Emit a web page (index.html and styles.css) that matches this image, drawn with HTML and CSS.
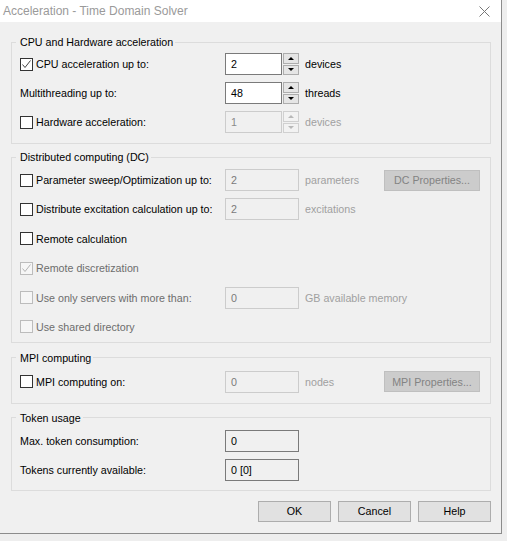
FILE: index.html
```html
<!DOCTYPE html>
<html lang="en">
<head>
<meta charset="UTF-8" />
<title>Acceleration - Time Domain Solver</title>
<link rel="stylesheet" href="styles.css">
</head>
<body>

<div class="window">
  <div class="titlebar">
    <span>Acceleration - Time Domain Solver</span>
    <svg class="close" width="11" height="11" viewBox="0 0 11 11"><path d="M0.5 0.5 L10.5 10.5 M10.5 0.5 L0.5 10.5" stroke="#777" stroke-width="1" fill="none"/></svg>
  </div>

  <div class="content">

    <!-- CPU -->
    <fieldset class="group g-cpu">
      <legend>CPU and Hardware acceleration</legend>
      <div class="rows">
        <div class="row">
          <label class="check"><span class="box"><svg width="11" height="11" viewBox="0 0 11 11"><path d="M1.5 5.5 L4 8.5 L9.5 1.5" stroke="#444" stroke-width="1" fill="none"/></svg></span>CPU acceleration up to:</label>
          <div class="spin"><div class="field">2</div><div class="arrows"><span class="up"></span><span class="down"></span></div></div>
          <span class="unit">devices</span>
        </div>
        <div class="row">
          <span class="text">Multithreading up to:</span>
          <div class="spin"><div class="field">48</div><div class="arrows"><span class="up"></span><span class="down"></span></div></div>
          <span class="unit">threads</span>
        </div>
        <div class="row">
          <label class="check"><span class="box"></span>Hardware acceleration:</label>
          <div class="spin off"><div class="field">1</div><div class="arrows"><span class="up"></span><span class="down"></span></div></div>
          <span class="unit off">devices</span>
        </div>
      </div>
    </fieldset>

    <!-- Distributed -->
    <fieldset class="group g-dc">
      <legend>Distributed computing (DC)</legend>
      <div class="rows">
        <div class="row">
          <label class="check"><span class="box"></span>Parameter sweep/Optimization up to:</label>
          <div class="input">2</div>
          <span class="unit off">parameters</span>
          <div class="btn off">DC Properties...</div>
        </div>
        <div class="row">
          <label class="check"><span class="box"></span>Distribute excitation calculation up to:</label>
          <div class="input">2</div>
          <span class="unit off">excitations</span>
        </div>
        <div class="row">
          <label class="check"><span class="box"></span>Remote calculation</label>
        </div>
        <div class="row">
          <label class="check off"><span class="box"><svg width="11" height="11" viewBox="0 0 11 11"><path d="M1.5 5.5 L4 8.5 L9.5 1.5" stroke="#b4b4b4" stroke-width="1" fill="none"/></svg></span>Remote discretization</label>
        </div>
        <div class="row">
          <label class="check off"><span class="box"></span>Use only servers with more than:</label>
          <div class="input">0</div>
          <span class="unit off wide">GB available memory</span>
        </div>
        <div class="row">
          <label class="check off"><span class="box"></span>Use shared directory</label>
        </div>
      </div>
    </fieldset>

    <!-- MPI -->
    <fieldset class="group g-mpi">
      <legend>MPI computing</legend>
      <div class="rows">
        <div class="row">
          <label class="check"><span class="box"></span>MPI computing on:</label>
          <div class="input">0</div>
          <span class="unit off">nodes</span>
          <div class="btn off">MPI Properties...</div>
        </div>
      </div>
    </fieldset>

    <!-- Tokens -->
    <fieldset class="group g-token">
      <legend>Token usage</legend>
      <div class="rows">
        <div class="row">
          <span class="text">Max. token consumption:</span>
          <div class="input ro">0</div>
        </div>
        <div class="row">
          <span class="text">Tokens currently available:</span>
          <div class="input ro">0 [0]</div>
        </div>
      </div>
    </fieldset>

    <div class="actions">
      <div class="btn">OK</div>
      <div class="btn">Cancel</div>
      <div class="btn">Help</div>
    </div>

  </div>
</div>

</body>
</html>
```

FILE: styles.css
```css
body { margin: 0; background: #eeeeee; font-family: "Liberation Sans", Arial, sans-serif; font-size: 10.7px; color: #000; }

.window { width: 501px; height: 533px; background: #f0f0f0; border-right: 1px solid #8c8c8c; border-bottom: 1px solid #8c8c8c; }

.titlebar { height: 22px; background: #fff; display: flex; align-items: center; justify-content: space-between; padding: 0 11px 0 3px; color: #9a9a9a; font-size: 12px; }
.titlebar .close { display: block; }

.content { padding: 13px 0 0 11px; }

/* group boxes */
.group { margin: 0; width: 480px; box-sizing: border-box; border: 1px solid #dcdcdc; padding: 4px 9px 10px 8px; min-width: 0; }
.group legend { padding: 0 2px 0 4px; margin-left: -4px; line-height: 14px; font-size: 10.7px; }
.g-dc { margin-top: 6px; padding-top: 5px; padding-bottom: 4px; }
.g-mpi { margin-top: 8px; padding-top: 6px; }
.g-token { margin-top: 7px; padding-top: 5px; padding-bottom: 9px; }

.rows { display: flex; flex-direction: column; gap: 7px; }
.g-dc .rows { gap: 7.4px; }
.row { display: grid; grid-template-columns: 205px 74px 85px 96px; height: 22px; align-items: center; }

.text { white-space: nowrap; }
.check { display: flex; align-items: center; white-space: nowrap; }
.check.off { color: #6d6d6d; }
.box { width: 13px; height: 13px; box-sizing: border-box; border: 1px solid #333; background: #fff; margin-right: 3px; flex: none; display: flex; align-items: center; justify-content: center; }
.check.off .box { border-color: #bcbcbc; background: #f6f6f6; }

.unit { padding-left: 6px; white-space: nowrap; }
.unit.off { color: #a0a0a0; }
.unit.wide { grid-column: 3 / 5; }

/* spin boxes */
.spin { display: flex; width: 74px; height: 22px; }
.spin .field { width: 57px; box-sizing: border-box; border: 1px solid #7a7a7a; background: #fff; padding-left: 5px; line-height: 20px; }
.spin .arrows { width: 17px; display: flex; flex-direction: column; gap: 1px; padding-left: 1px; box-sizing: border-box; }
.spin .arrows span { flex: 1; border: 1px solid #adadad; background: #e5e5e5; display: flex; align-items: center; justify-content: center; }
.spin .arrows .up::before { content: ""; border-left: 3px solid transparent; border-right: 3px solid transparent; border-bottom: 3px solid #000; }
.spin .arrows .down::before { content: ""; border-left: 3px solid transparent; border-right: 3px solid transparent; border-top: 3px solid #000; }
.spin.off .field { border-color: #cccccc; background: #f0f0f0; color: #8a8a8a; }
.spin.off .arrows span { border-color: #d0d0d0; background: #f2f2f2; }
.spin.off .arrows .up::before { border-bottom-color: #b8b8b8; }
.spin.off .arrows .down::before { border-top-color: #b8b8b8; }

/* plain edit fields */
.input { width: 74px; height: 22px; box-sizing: border-box; border: 1px solid #cccccc; background: #f0f0f0; padding-left: 5px; line-height: 20px; color: #7a7a7a; }
.input.ro { border-color: #7a7a7a; color: #000; }

/* push buttons */
.btn { height: 21px; box-sizing: border-box; border: 1px solid #adadad; background: #e1e1e1; display: flex; align-items: center; justify-content: center; }
.btn.off { background: #cccccc; border-color: #bfbfbf; color: #838383; }

.actions { display: flex; justify-content: flex-end; gap: 7px; margin-top: 10px; width: 480px; }
.actions .btn { width: 73px; }
```
